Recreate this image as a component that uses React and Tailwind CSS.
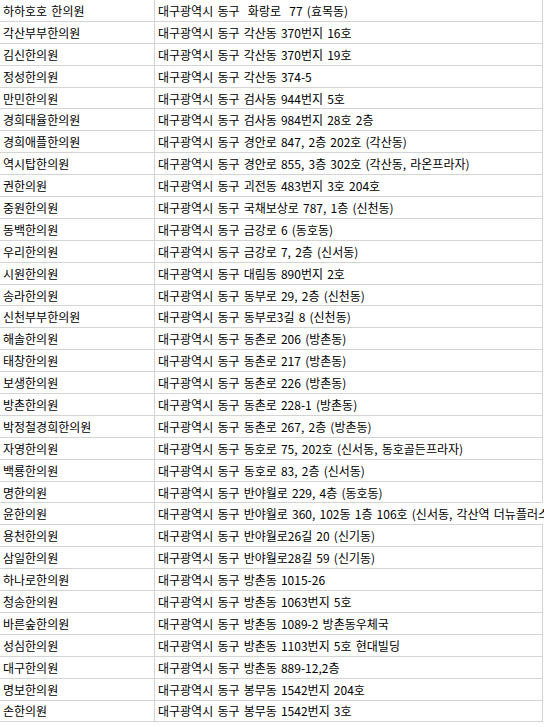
import React from "react";

const rows = [
  ["하하호호 한의원", "대구광역시 동구  화랑로  77 (효목동)"],
  ["각산부부한의원", "대구광역시 동구 각산동 370번지 16호"],
  ["김신한의원", "대구광역시 동구 각산동 370번지 19호"],
  ["정성한의원", "대구광역시 동구 각산동 374-5"],
  ["만민한의원", "대구광역시 동구 검사동 944번지 5호"],
  ["경희태율한의원", "대구광역시 동구 검사동 984번지 28호 2층"],
  ["경희애플한의원", "대구광역시 동구 경안로 847, 2층 202호 (각산동)"],
  ["역시탑한의원", "대구광역시 동구 경안로 855, 3층 302호 (각산동, 라온프라자)"],
  ["권한의원", "대구광역시 동구 괴전동 483번지 3호 204호"],
  ["중원한의원", "대구광역시 동구 국채보상로 787, 1층 (신천동)"],
  ["동백한의원", "대구광역시 동구 금강로 6 (동호동)"],
  ["우리한의원", "대구광역시 동구 금강로 7, 2층 (신서동)"],
  ["시원한의원", "대구광역시 동구 대림동 890번지 2호"],
  ["송라한의원", "대구광역시 동구 동부로 29, 2층 (신천동)"],
  ["신천부부한의원", "대구광역시 동구 동부로3길 8 (신천동)"],
  ["해솔한의원", "대구광역시 동구 동촌로 206 (방촌동)"],
  ["태창한의원", "대구광역시 동구 동촌로 217 (방촌동)"],
  ["보생한의원", "대구광역시 동구 동촌로 226 (방촌동)"],
  ["방촌한의원", "대구광역시 동구 동촌로 228-1 (방촌동)"],
  ["박정철경희한의원", "대구광역시 동구 동촌로 267, 2층 (방촌동)"],
  ["자영한의원", "대구광역시 동구 동호로 75, 202호 (신서동, 동호골든프라자)"],
  ["백룡한의원", "대구광역시 동구 동호로 83, 2층 (신서동)"],
  ["명한의원", "대구광역시 동구 반야월로 229, 4층 (동호동)"],
  ["윤한의원", "대구광역시 동구 반야월로 360, 102동 1층 106호 (신서동, 각산역 더뉴플러스)", true],
  ["용천한의원", "대구광역시 동구 반야월로26길 20 (신기동)"],
  ["삼일한의원", "대구광역시 동구 반야월로28길 59 (신기동)"],
  ["하나로한의원", "대구광역시 동구 방촌동 1015-26"],
  ["청송한의원", "대구광역시 동구 방촌동 1063번지 5호"],
  ["바른숲한의원", "대구광역시 동구 방촌동 1089-2 방촌동우체국"],
  ["성심한의원", "대구광역시 동구 방촌동 1103번지 5호 현대빌딩"],
  ["대구한의원", "대구광역시 동구 방촌동 889-12,2층"],
  ["명보한의원", "대구광역시 동구 봉무동 1542번지 204호"],
  ["손한의원", "대구광역시 동구 봉무동 1542번지 3호"],
];

export default function App() {
  return (
    <div
      className="w-[544px] h-[727px] overflow-hidden bg-white text-black text-[12px] leading-none [word-spacing:1.5px]"
      style={{ fontFamily: '"Noto Sans CJK KR", "Noto Sans", sans-serif' }}
    >
      <div className="flex flex-col">
        {rows.map(([name, addr, overflow], i) => (
          <div key={i} className="flex h-[21.9px] shrink-0">
            <div className="w-[155px] shrink-0 border-r border-b border-[#d4d4d4] pl-[3px] flex items-center pt-[1px] whitespace-nowrap">
              {name}
            </div>
            <div
              className={
                overflow
                  ? "w-[388px] shrink-0 border-b border-[#d4d4d4] pl-[3px] flex items-center pt-[1px] whitespace-nowrap overflow-visible"
                  : "w-[388px] shrink-0 border-r border-b border-[#d4d4d4] pl-[3px] flex items-center pt-[1px] whitespace-nowrap"
              }
            >
              <span className="whitespace-pre">{addr}</span>
            </div>
          </div>
        ))}
      </div>
    </div>
  );
}
